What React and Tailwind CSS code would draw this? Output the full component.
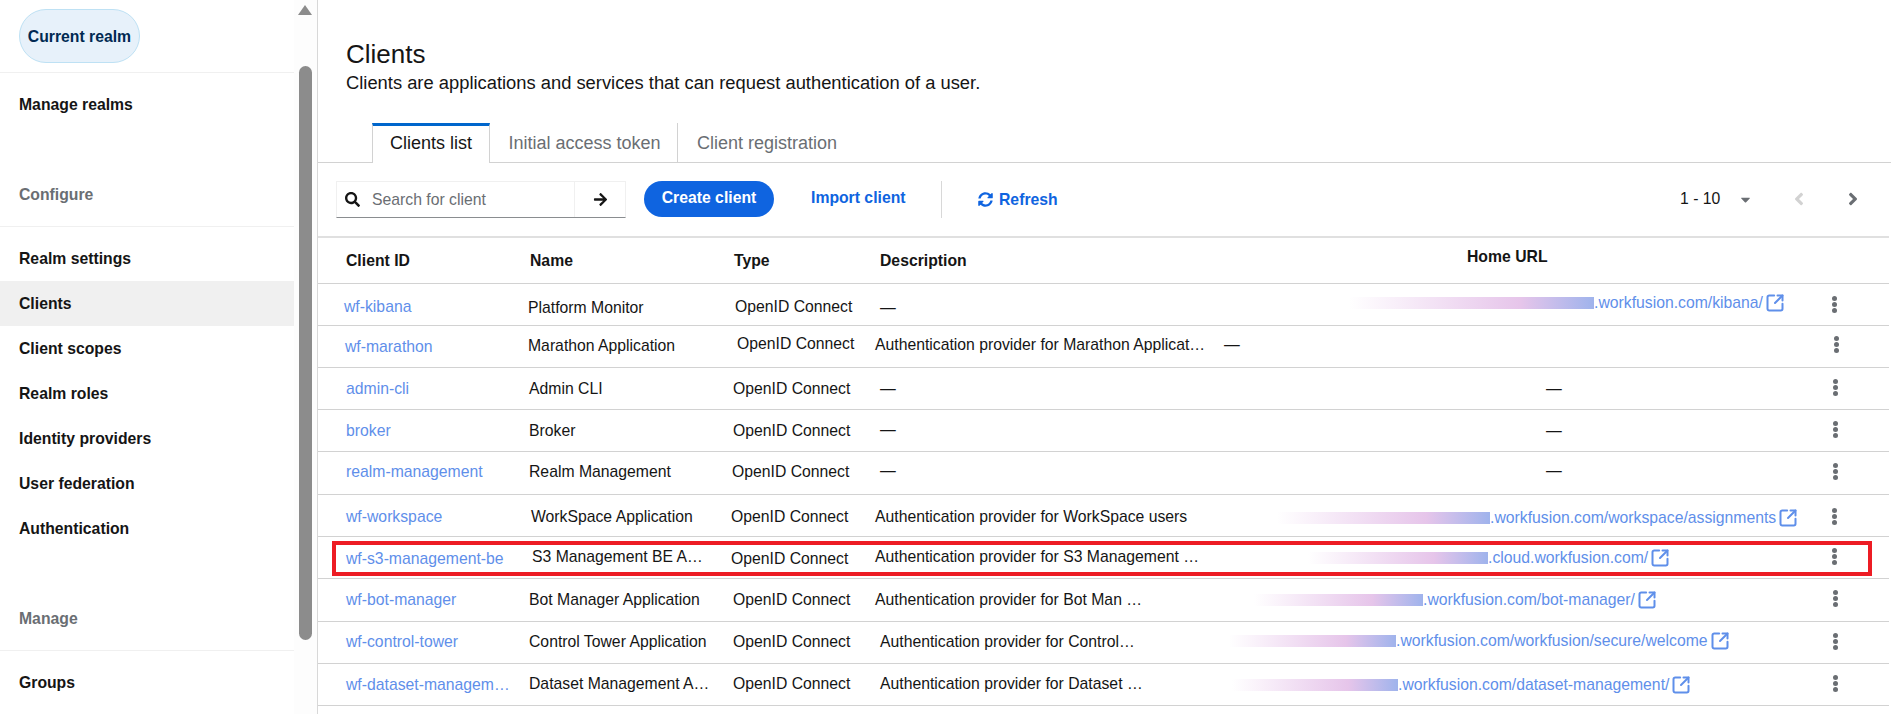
import { FaSearch, FaArrowRight, FaSyncAlt, FaCaretDown, FaAngleLeft, FaAngleRight } from "react-icons/fa"
import { SquareArrowOutUpRight } from "lucide-react"

const configureItems = ["Realm settings", "Clients", "Client scopes", "Realm roles", "Identity providers", "User federation", "Authentication"]

const clients = [
    {
        row: "h-[42px]",
        id: { text: "wf-kibana", cls: "pl-[26px] pt-[13px]" },
        name: { text: "Platform Monitor", cls: "pt-[14px]" },
        type: "pl-[5px] pt-[13px]",
        desc: { text: "—", cls: "pl-[6px] pt-[14px]" },
        home: { cls: "pl-[125px] pt-[9px]", bar: "w-[245px]", url: ".workfusion.com/kibana/" },
        kebab: "pl-[12px] pt-[10px]",
    },
    {
        row: "h-[42px]",
        id: { text: "wf-marathon", cls: "pl-[27px] pt-[11px]" },
        name: { text: "Marathon Application", cls: "pt-[10px]" },
        type: "pl-[7px] pt-[8px]",
        desc: { text: "Authentication provider for Marathon Applicat…", cls: "pl-[1px] pt-[9px]" },
        home: { cls: "pt-[9px]", dash: true },
        kebab: "pl-[14px] pt-[8px]",
    },
    {
        row: "h-[42px]",
        id: { text: "admin-cli", cls: "pl-[28px] pt-[11px]" },
        name: { text: "Admin CLI", cls: "pl-[1px] pt-[11px]" },
        type: "pl-[3px] pt-[11px]",
        desc: { text: "—", cls: "pl-[6px] pt-[11px]" },
        home: { cls: "pl-[322px] pt-[11px]", dash: true },
        kebab: "pl-[13px] pt-[9px]",
    },
    {
        row: "h-[42px]",
        id: { text: "broker", cls: "pl-[28px] pt-[11px]" },
        name: { text: "Broker", cls: "pl-[1px] pt-[11px]" },
        type: "pl-[3px] pt-[11px]",
        desc: { text: "—", cls: "pl-[6px] pt-[10px]" },
        home: { cls: "pl-[322px] pt-[11px]", dash: true },
        kebab: "pl-[13px] pt-[9px]",
    },
    {
        row: "h-[43px]",
        id: { text: "realm-management", cls: "pl-[28px] pt-[10px]" },
        name: { text: "Realm Management", cls: "pl-[1px] pt-[10px]" },
        type: "pl-[2px] pt-[10px]",
        desc: { text: "—", cls: "pl-[6px] pt-[9px]" },
        home: { cls: "pl-[322px] pt-[9px]", dash: true },
        kebab: "pl-[13px] pt-[9px]",
    },
    {
        row: "h-[42px]",
        id: { text: "wf-workspace", cls: "pl-[28px] pt-[12px]" },
        name: { text: "WorkSpace Application", cls: "pl-[3px] pt-[12px]" },
        type: "pl-[1px] pt-[12px]",
        desc: { text: "Authentication provider for WorkSpace users", cls: "pl-[1px] pt-[12px]" },
        home: { cls: "pl-[53px] pt-[13px]", bar: "w-[213px]", url: ".workfusion.com/workspace/assignments" },
        kebab: "pl-[12px] pt-[11px]",
    },
    {
        row: "h-[42px]",
        box: true,
        id: { text: "wf-s3-management-be", cls: "pl-[28px] pt-[12px]" },
        name: { text: "S3 Management BE A…", cls: "pl-[4px] pt-[10px]" },
        type: "pl-[1px] pt-[12px]",
        desc: { text: "Authentication provider for S3 Management …", cls: "pl-[1px] pt-[10px]" },
        home: { cls: "pl-[84px] pt-[11px]", bar: "w-[180px]", url: ".cloud.workfusion.com/" },
        kebab: "pl-[12px] pt-[9px]",
    },
    {
        row: "h-[43px]",
        id: { text: "wf-bot-manager", cls: "pl-[28px] pt-[11px]" },
        name: { text: "Bot Manager Application", cls: "pl-[1px] pt-[11px]" },
        type: "pl-[3px] pt-[11px]",
        desc: { text: "Authentication provider for Bot Man …", cls: "pl-[1px] pt-[11px]" },
        home: { cls: "pl-[30px] pt-[11px]", bar: "w-[169px]", url: ".workfusion.com/bot-manager/" },
        kebab: "pl-[13px] pt-[9px]",
    },
    {
        row: "h-[42px]",
        id: { text: "wf-control-tower", cls: "pl-[28px] pt-[10px]" },
        name: { text: "Control Tower Application", cls: "pl-[1px] pt-[10px]" },
        type: "pl-[3px] pt-[10px]",
        desc: { text: "Authentication provider for Control…", cls: "pl-[6px] pt-[10px]" },
        home: { cls: "pl-[5px] pt-[9px]", bar: "w-[167px]", url: ".workfusion.com/workfusion/secure/welcome" },
        kebab: "pl-[13px] pt-[9px]",
    },
    {
        row: "h-[42px]",
        id: { text: "wf-dataset-managem…", cls: "pl-[28px] pt-[11px]" },
        name: { text: "Dataset Management A…", cls: "pl-[1px] pt-[10px]" },
        type: "pl-[3px] pt-[10px]",
        desc: { text: "Authentication provider for Dataset …", cls: "pl-[6px] pt-[10px]" },
        home: { cls: "pl-[8px] pt-[11px]", bar: "w-[166px]", url: ".workfusion.com/dataset-management/" },
        kebab: "pl-[13px] pt-[9px]",
    },
]

const Sidebar = () => {
    return (
        <div className="flex w-[318px] shrink-0 border-r border-[#d8d8d8]">
            <div className="w-[294px] shrink-0 font-bold text-[#151515]">
                <div className="h-[73px] border-b border-[#f0f0f0] pl-[19px] pt-[9px]">
                    <div className="flex h-[54px] w-[121px] items-center justify-center rounded-[27px] border border-[#bee1f4] bg-[#e7f1fa] pt-[2px] text-[#002952]">
                        Current realm
                    </div>
                </div>
                <div className="flex h-[64px] items-center pl-[19px]">Manage realms</div>

                <div className="mt-[25px] flex h-[65px] items-center border-b border-[#f0f0f0] pl-[19px] pt-[2px] text-[#6a6e73]">Configure</div>
                <div className="mt-[9px]">
                    {configureItems.map((item) => (
                        <div key={item} className={`flex h-[45px] items-center pl-[19px] ${item === "Clients" ? "bg-[#f0f0f0]" : ""}`}>
                            {item}
                        </div>
                    ))}
                </div>

                <div className="mt-[35px] flex h-[65px] items-center border-b border-[#f0f0f0] pl-[19px] pt-[2px] text-[#6a6e73]">Manage</div>
                <div className="mt-[9px] flex h-[45px] items-center pl-[19px]">Groups</div>
            </div>

            {/* scrollbar */}
            <div className="flex-1 bg-[#fdfdfd] pl-[4px] pt-[5px]">
                <svg width="14" height="10" viewBox="0 0 14 10" className="block">
                    <path d="M7 0 L14 10 L0 10 Z" fill="#8c8c8c" />
                </svg>
                <div className="mt-[51px] ml-px h-[574px] w-[13px] rounded-full bg-[#8c8c8c]"></div>
            </div>
        </div>
    )
}

const Tabs = () => {
    return (
        <div className="mt-[28px] flex h-[40px] border-b border-[#d2d2d2] pl-[54px] text-[18px]">
            <div className="flex h-[40px] w-[118px] items-center justify-center border-x border-t-[3px] border-[#d2d2d2] border-t-[#0066cc] bg-white pb-[3px] text-[#151515]">
                Clients list
            </div>
            <div className="flex h-[39px] w-[188px] items-center justify-center border-r border-[#d2d2d2] pl-[2px] text-[#6a6e73]">Initial access token</div>
            <div className="flex h-[39px] items-center pl-[19px] text-[#6a6e73]">Client registration</div>
        </div>
    )
}

const Toolbar = () => {
    return (
        <div className="flex h-[73px] pl-[18px] pt-[18px]">
            <div className="flex h-[37px] w-[290px] border border-b-[#8a8d90] border-x-[#f0f0f0] border-t-[#f0f0f0]">
                <div className="flex flex-1 items-center pl-[8px] text-[#6a6e73]">
                    <FaSearch className="mr-[12px] text-[15px] text-[#151515]" />
                    Search for client
                </div>
                <div className="flex w-[51px] items-center justify-center border-l border-[#f0f0f0]">
                    <FaArrowRight className="text-[15px] text-[#151515]" />
                </div>
            </div>
            <button className="ml-[18px] h-[36px] w-[130px] rounded-[18px] bg-[#0f64e0] pb-[2px] font-bold text-white">Create client</button>
            <button className="ml-[37px] h-[36px] w-[94px] whitespace-nowrap pb-[2px] text-left font-bold text-[#0f64e0]">Import client</button>
            <div className="ml-[36px] h-[37px] w-px bg-[#d8d8d8]"></div>
            <button className="ml-[36px] flex h-[36px] items-center pt-[1px] font-bold text-[#0f64e0]">
                <FaSyncAlt className="mr-[6px] text-[15px]" />
                Refresh
            </button>
            <div className="ml-auto flex h-[36px] items-center pr-[28px] text-[#151515]">
                <span className="w-[58px]">1 - 10</span>
                <FaCaretDown className="text-[15px] text-[#6a6e73]" />
                <FaAngleLeft className="ml-[36px] text-[20px] text-[#d2d2d2]" />
                <FaAngleRight className="ml-[34px] text-[20px] text-[#6a6e73]" />
            </div>
        </div>
    )
}

const HeaderRow = () => {
    return (
        <div className="flex h-[46px] border-b border-[#d2d2d2] font-bold text-[#151515]">
            <div className="w-[210px] pl-[28px] pt-[13px]">Client ID</div>
            <div className="w-[202px] pl-[2px] pt-[13px]">Name</div>
            <div className="w-[144px] pl-[4px] pt-[13px]">Type</div>
            <div className="w-[350px] pl-[6px] pt-[13px]">Description</div>
            <div className="pl-[243px] pt-[9px]">Home URL</div>
        </div>
    )
}

const ClientRow = ({ client }) => {
    const { id, name, desc, home } = client

    return (
        <div className={`relative flex border-b border-[#d2d2d2] text-[#151515] ${client.row}`}>
            <a className={`w-[210px] text-[#5f8fea] ${id.cls}`}>{id.text}</a>
            <div className={`w-[202px] ${name.cls}`}>{name.text}</div>
            <div className={`w-[144px] ${client.type}`}>OpenID Connect</div>
            <div className={`w-[350px] ${desc.cls}`}>{desc.text}</div>
            <div className={`flex h-fit w-[596px] items-center ${home.cls}`}>
                {home.dash && "—"}
                {home.url && (
                    <>
                        <div className={`h-[12px] bg-linear-to-r from-white via-[#e6c5ea] via-70% to-[#9fb3ec] ${home.bar}`}></div>
                        <a className="text-[#5f8fea]">{home.url}</a>
                        <SquareArrowOutUpRight className="ml-[2px] h-[20px] w-[20px] text-[#5f8fea]" strokeWidth={2.4} />
                    </>
                )}
            </div>
            <div className={`${client.kebab}`}>
                <div className="flex h-5 flex-col justify-center gap-px">
                    <span className="h-[5px] w-[5px] rounded-full bg-[#6a6e73]"></span>
                    <span className="h-[5px] w-[5px] rounded-full bg-[#6a6e73]"></span>
                    <span className="h-[5px] w-[5px] rounded-full bg-[#6a6e73]"></span>
                </div>
            </div>
            {client.box && <div className="absolute left-[14px] right-[17px] top-[4px] h-[35px] border-4 border-[#ed1c24]"></div>}
        </div>
    )
}

const App = () => {
    return (
        <div className="flex h-screen overflow-hidden bg-white font-['Liberation_Sans',Arial,sans-serif] text-[15.75px] leading-5">
            <Sidebar />
            <div className="flex-1">
                <div className="pl-[28px] pt-[38px] text-[#151515]">
                    <h1 className="text-[26px] leading-[32px]">Clients</h1>
                    <p className="mt-px text-[18.35px] leading-[24px]">Clients are applications and services that can request authentication of a user.</p>
                </div>
                <Tabs />
                <Toolbar />
                <div className="mr-[2px] border-t-2 border-[#e0e0e0]">
                    <HeaderRow />
                    {clients.map((client) => (
                        <ClientRow key={client.id.text} client={client} />
                    ))}
                </div>
            </div>
        </div>
    )
}

export default App
